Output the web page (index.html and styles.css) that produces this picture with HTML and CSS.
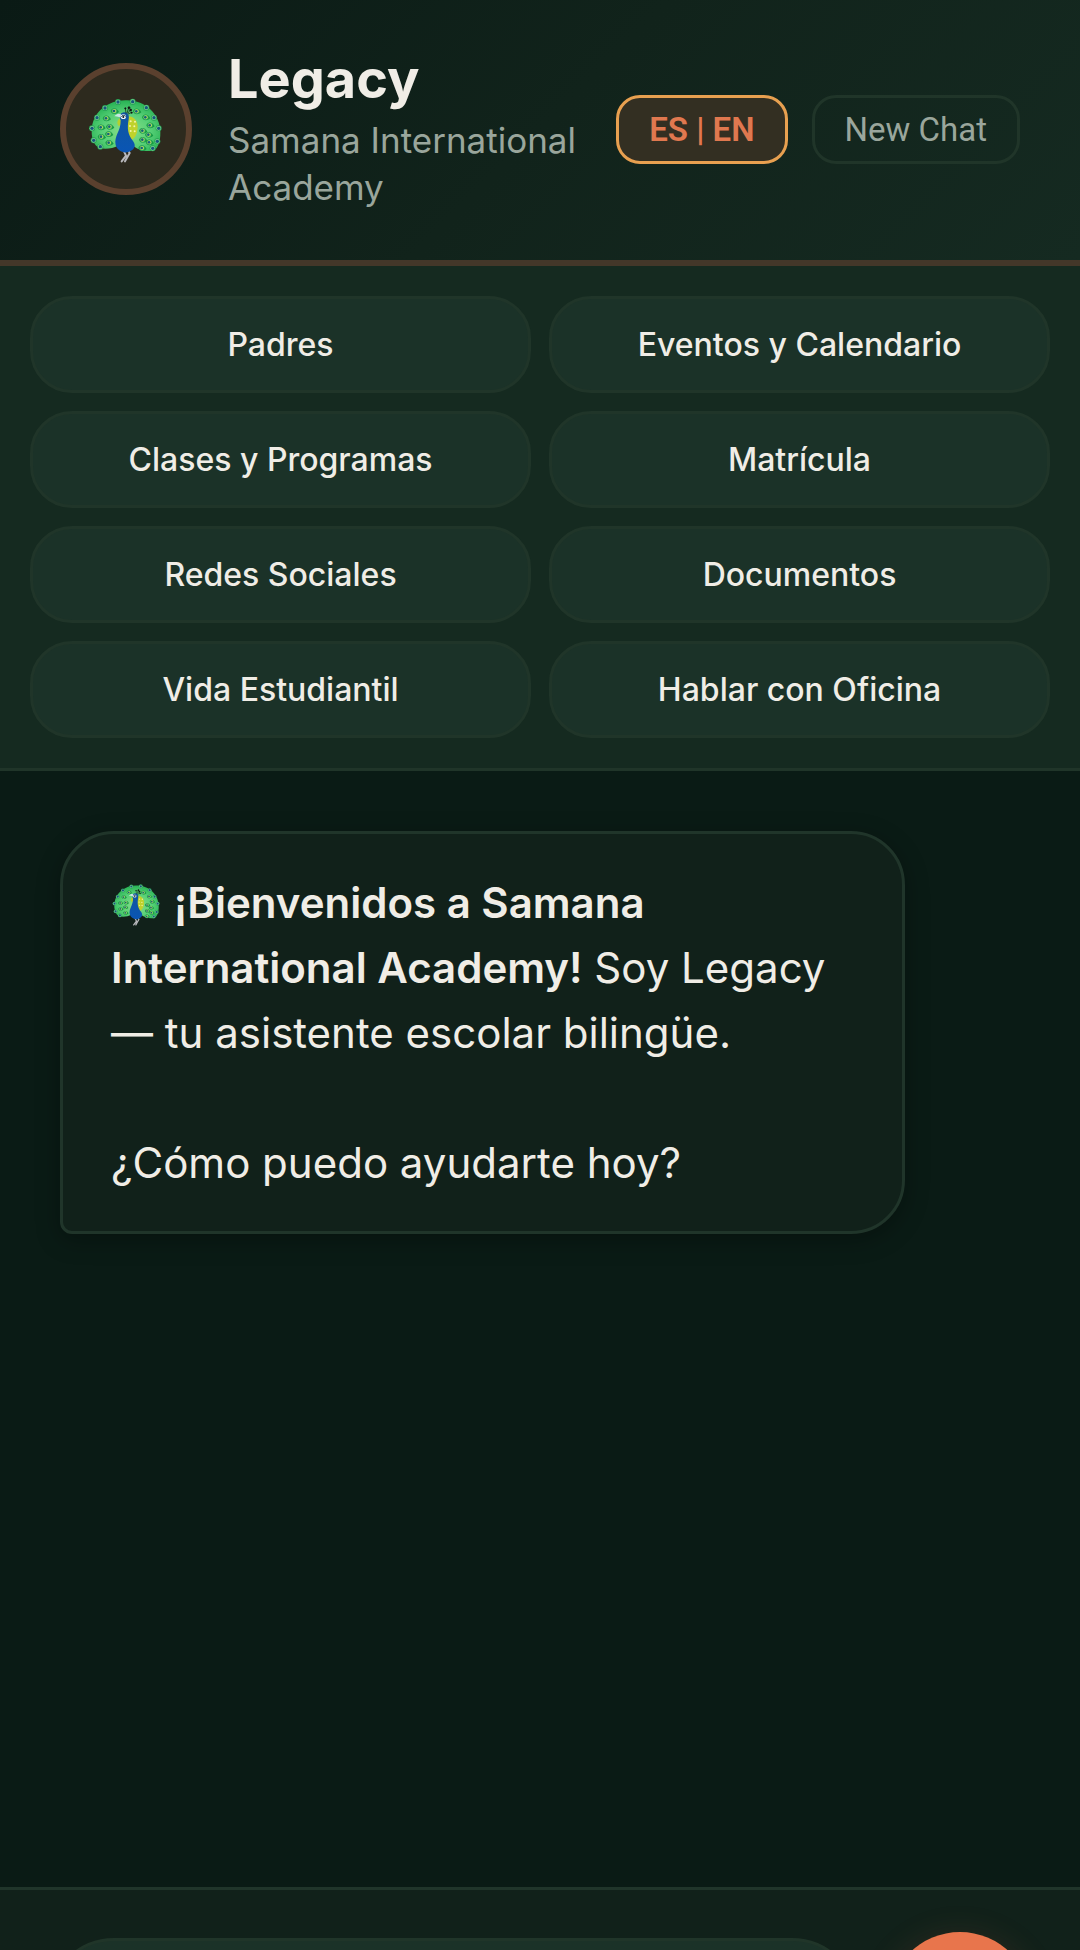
FILE: index.html
```html
<!DOCTYPE html>
<html lang="es">

<head>
    <meta charset="UTF-8">
    <meta name="viewport" content="width=device-width, initial-scale=1.0">
    <title>Legacy - Samana International Academy</title>
    <link rel="stylesheet" href="styles.css">
</head>

<body>
    <svg class="sprite" aria-hidden="true">
        <defs>
            <radialGradient id="fan" cx="50%" cy="60%" r="60%">
                <stop offset="0" stop-color="#8fe08a" />
                <stop offset="0.6" stop-color="#56cf76" />
                <stop offset="1" stop-color="#27b254" />
            </radialGradient>
            <linearGradient id="neck" x1="0" y1="0" x2="0" y2="1">
                <stop offset="0" stop-color="#10579f" />
                <stop offset="1" stop-color="#0a55b4" />
            </linearGradient>
            <g id="feather">
                <path d="M-11 0C-7 -10 5 -13 14 3C4 12 -8 10 -11 0Z" fill="#159a42" />
                <circle r="8" fill="#2fa862" />
                <circle r="6" fill="#b6e05a" />
                <circle cx="-1" r="4" fill="#12607f" />
            </g>
            <g id="featherTip">
                <circle r="9" fill="#22a052" />
                <circle r="7" fill="#7fcf92" />
                <circle r="5" fill="#14597c" />
            </g>
            <symbol id="peacock" viewBox="118 132 222 204">
                <path d="M229 148C285 146 332 190 332 243C333 275 322 299 306 300C280 302 262 294 250 284L205 284C190 292 168 296 150 291C132 284 123 258 127 228C133 182 176 147 229 148Z" fill="url(#fan)" />
                <use href="#feather" x="154" y="229" />
                <use href="#feather" x="155" y="257" />
                <use href="#feather" x="178" y="275" />
                <use href="#feather" x="170" y="202" />
                <use href="#feather" x="194" y="180" />
                <use href="#feather" x="180" y="227" />
                <use href="#feather" x="177" y="249" />
                <use href="#feather" x="261" y="181" />
                <use href="#feather" x="288" y="199" />
                <use href="#feather" x="301" y="223" />
                <use href="#feather" x="297" y="251" />
                <use href="#feather" x="299" y="274" />
                <use href="#feather" x="279" y="239" />
                <use href="#feather" x="279" y="266" />
                <use href="#feather" x="277" y="291" />
                <use href="#featherTip" x="127" y="232" />
                <use href="#featherTip" x="132" y="268" />
                <use href="#featherTip" x="152" y="287" />
                <use href="#featherTip" x="142" y="200" />
                <use href="#featherTip" x="166" y="171" />
                <use href="#featherTip" x="205" y="153" />
                <use href="#featherTip" x="249" y="152" />
                <use href="#featherTip" x="290" y="170" />
                <use href="#featherTip" x="313" y="200" />
                <use href="#featherTip" x="327" y="232" />
                <use href="#featherTip" x="323" y="271" />
                <use href="#featherTip" x="309" y="292" />
                <path d="M212 202C202 206 200 218 208 226C216 218 218 208 212 202Z" fill="#b5cf2c" />
                <path d="M232 196C250 194 265 208 264 228C263 250 256 262 242 268L226 240Z" fill="#bfd22c" />
                <g fill="#f3f3a8">
                    <circle cx="243" cy="211" r="3" />
                    <circle cx="256" cy="212" r="3" />
                    <circle cx="241" cy="225" r="3" />
                    <circle cx="254" cy="226" r="3" />
                    <circle cx="243" cy="240" r="3" />
                    <circle cx="255" cy="241" r="3" />
                </g>
                <path d="M222 299L229 314L216 331M236 299L240 306L232 320L226 331" fill="none" stroke="#b9b9bd" stroke-width="6" stroke-linecap="round" stroke-linejoin="round" />
                <path d="M222 184C234 183 240 192 237 205C232 232 234 250 250 270C262 286 252 298 236 303C220 308 202 297 198 282C192 256 214 240 213 208C207 198 210 186 222 184Z" fill="url(#neck)" />
                <path d="M214 190C206 186 200 189 194 196C202 195 207 199 213 199Z" fill="#c9e6e3" />
                <ellipse cx="221" cy="197" rx="8" ry="7" fill="#f4f7f5" />
                <path d="M215 197C218 192 224 192 228 196" fill="none" stroke="#0b2d52" stroke-width="3" />
                <circle cx="221" cy="198" r="3" fill="#0b1a22" />
                <g fill="#111" stroke="#111" stroke-width="2">
                    <path d="M229 187L227 172M232 186L237 170M234 187L243 176M235 189L247 184" />
                    <circle cx="227" cy="172" r="2" />
                    <circle cx="238" cy="170" r="3" />
                    <circle cx="243" cy="177" r="3" />
                    <circle cx="246" cy="185" r="2" />
                </g>
            </symbol>
        </defs>
    </svg>

    <div class="app">
        <header class="header">
            <div class="avatar">
                <svg class="avatar-icon" role="img" aria-label="Pavo real"><use href="#peacock" /></svg>
            </div>
            <div class="brand">
                <h1>Legacy</h1>
                <p>Samana International Academy</p>
            </div>
            <div class="header-actions">
                <button type="button" class="header-btn active">ES | EN</button>
                <button type="button" class="header-btn">New Chat</button>
            </div>
        </header>

        <nav class="quick-menu">
            <button type="button">Padres</button>
            <button type="button">Eventos y Calendario</button>
            <button type="button">Clases y Programas</button>
            <button type="button">Matrícula</button>
            <button type="button">Redes Sociales</button>
            <button type="button">Documentos</button>
            <button type="button">Vida Estudiantil</button>
            <button type="button">Hablar con Oficina</button>
        </nav>

        <main class="chat">
            <div class="message bot">
                <svg class="emoji" role="img" aria-label="Pavo real"><use href="#peacock" /></svg>
                <strong>¡Bienvenidos a Samana International Academy!</strong> Soy Legacy — tu asistente escolar bilingüe.<br><br>¿Cómo puedo ayudarte hoy?
            </div>
        </main>

        <form class="composer">
            <input type="text" class="composer-input" aria-label="Mensaje">
            <button type="button" class="send-btn" aria-label="Enviar"></button>
        </form>
    </div>
</body>

</html>
```
FILE: styles.css
```css
* {
    box-sizing: border-box;
    margin: 0;
    padding: 0;
}

html {
    scrollbar-width: none;
}

body {
    font-family: "Inter", "Open Sans", sans-serif;
    background: #0a1b15;
    color: #f0ede6;
}

button,
input {
    font-family: inherit;
    color: inherit;
}

.sprite {
    position: absolute;
    width: 0;
    height: 0;
}

/* runs a little past the screen, the composer sits on the fold */
.app {
    display: flex;
    flex-direction: column;
    min-height: calc(100vh + 168px);
}

/* header */
.header {
    display: flex;
    align-items: center;
    gap: 36px;
    padding: 47px 60px 49px;
    background: linear-gradient(135deg, #0a1a15 0%, #11231b 50%, #152a21 100%);
    border-bottom: 6px solid #433729;
}

.avatar {
    display: flex;
    align-items: center;
    justify-content: center;
    flex-shrink: 0;
    width: 132px;
    height: 132px;
    background: #2d2a1e;
    border: 6px solid #5a402e;
    border-radius: 50%;
}

.avatar-icon {
    width: 74px;
    height: 68px;
}

.brand {
    flex: 1;
}

.brand h1 {
    font-size: 54px;
    font-weight: 700;
    line-height: 64px;
    margin-bottom: 6px;
}

.brand p {
    font-size: 35px;
    line-height: 47px;
    color: #9aa69c;
}

.header-actions {
    display: flex;
    gap: 24px;
    flex-shrink: 0;
}

.header-btn {
    font-family: "Roboto", sans-serif;
    font-size: 33px;
    line-height: 39px;
    padding: 12px 30px;
    color: #9aa69c;
    background: transparent;
    border: 3px solid #203529;
    border-radius: 24px;
    cursor: pointer;
    white-space: nowrap;
}

.header-btn.active {
    font-weight: 600;
    color: #e0784f;
    background: #332f22;
    border-color: #e8a050;
}

/* quick menu */
.quick-menu {
    display: grid;
    grid-template-columns: 1fr 1fr;
    gap: 18px;
    padding: 30px;
    background: #152a20;
    border-bottom: 3px solid #203529;
}

.quick-menu button {
    font-size: 32px;
    font-weight: 500;
    line-height: 43px;
    padding: 24px;
    background: #1b3228;
    border: 3px solid #203529;
    border-radius: 42px;
    cursor: pointer;
}

/* chat */
.chat {
    flex: 1;
    padding: 60px;
}

.message {
    width: 88%;
    padding: 36px 48px;
    font-size: 42px;
    line-height: 65px;
    border: 3px solid #20352a;
    border-radius: 54px;
    box-shadow: 0 6px 24px rgba(0, 0, 0, 0.3);
}

.message.bot {
    background: #11211a;
    border-bottom-left-radius: 12px;
}

.message strong {
    font-weight: 600;
}

.emoji {
    width: 49px;
    height: 44px;
    margin: 0 1px;
    vertical-align: -8px;
}

/* composer */
.composer {
    display: flex;
    align-items: center;
    gap: 30px;
    padding: 42px 48px;
    background: #11211a;
    border-top: 3px solid #20352a;
}

.composer-input {
    flex: 1;
    min-width: 0;
    height: 132px;
    padding: 0 54px;
    font-size: 42px;
    background: #1b3228;
    border: 3px solid #203529;
    border-radius: 66px;
}

.send-btn {
    width: 144px;
    height: 144px;
    background: #e8754c;
    border: none;
    border-radius: 50%;
    box-shadow: 0 6px 36px rgba(232, 117, 76, 0.15);
    cursor: pointer;
}
```
